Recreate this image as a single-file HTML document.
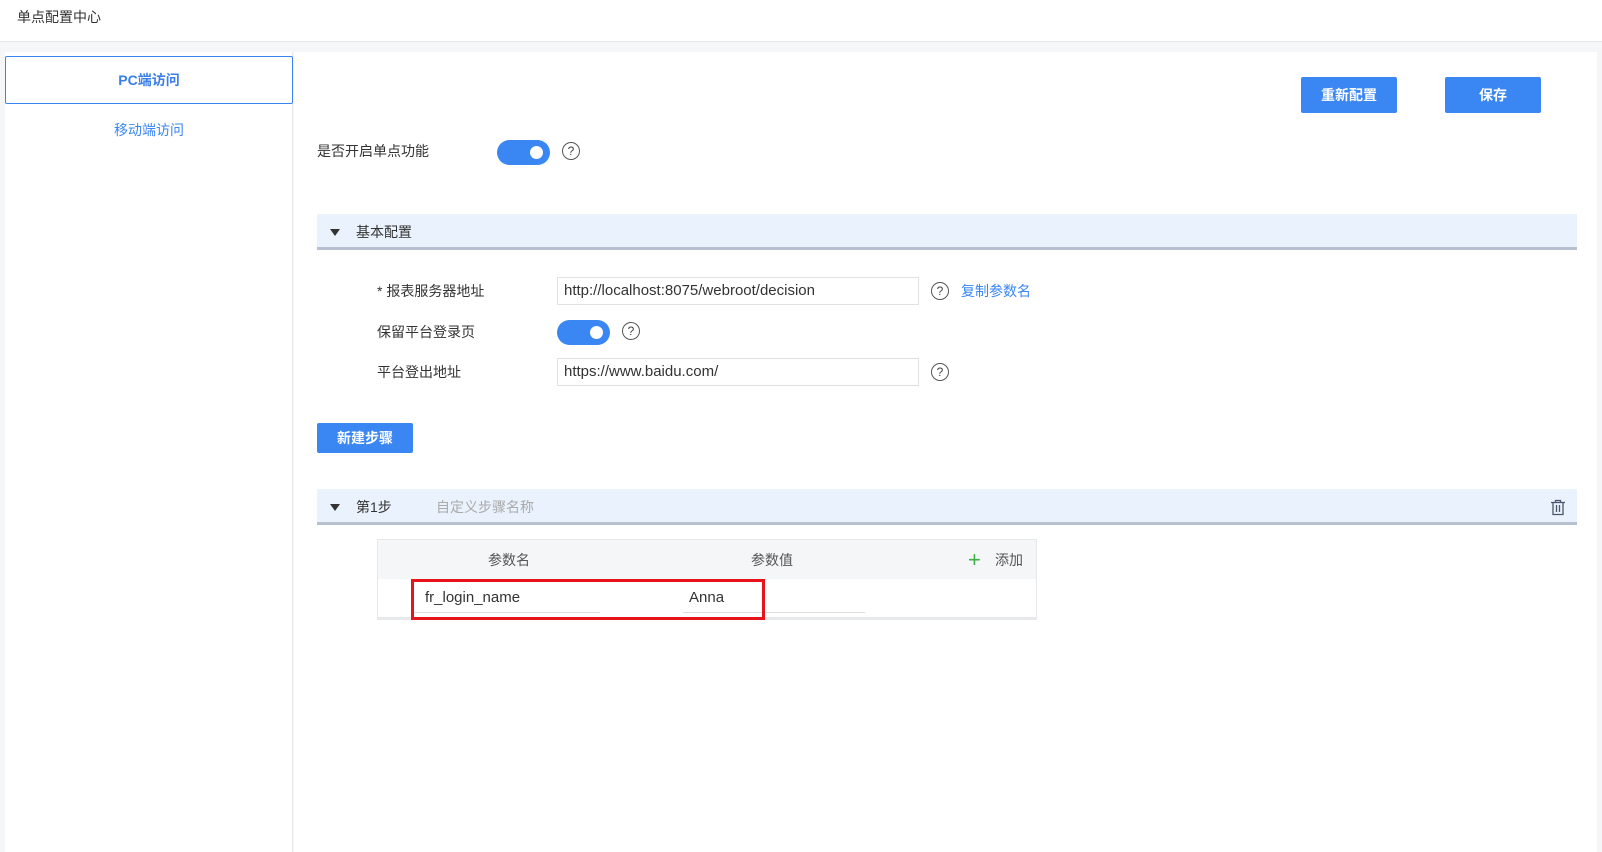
<!DOCTYPE html>
<html><head><meta charset="utf-8"><style>
*{box-sizing:border-box;margin:0;padding:0}
body{width:1602px;height:840px;background:#f5f6f8;font-family:"Liberation Sans","Noto Sans CJK SC",sans-serif;font-size:14px;color:#333;position:relative;overflow:hidden}
.a{position:absolute}
.hdr{left:0;top:0;width:1602px;height:42px;background:#fff;border-bottom:1px solid #e6e8eb}
.side{left:5px;top:52px;width:288px;height:800px;background:#fff;border-right:1px solid #e6e8eb}
.main{left:294px;top:52px;width:1303px;height:800px;background:#fff}
.btn{background:#3a86f3;color:#fff;font-weight:bold;border-radius:2px;text-align:center}
.tg{width:53px;height:25px;border-radius:13px;background:#3a86f3}
.tg:after{content:"";position:absolute;right:7px;top:6px;width:13px;height:13px;border-radius:50%;background:#fff}
.q{width:18px;height:18px;border:1.3px solid #555;border-radius:50%;font-size:12px;line-height:16px;text-align:center;color:#444}
.sec{left:317px;width:1260px;height:36px;background:#eaf2fd;border-bottom:3px solid #b5c1d1}
.tri{width:0;height:0;border-left:5px solid transparent;border-right:5px solid transparent;border-top:7px solid #333}
.inp{height:28px;border:1px solid #dfe1e5;background:#fff;padding-left:6px;line-height:26px;font-size:15px;color:#333}
.t{line-height:20px}
</style></head><body>
<div class="a hdr"></div>
<div class="a t" style="left:17px;top:7px;font-size:14px;color:#333">单点配置中心</div>
<div class="a side"></div>
<div class="a main"></div>
<div class="a" style="left:5px;top:56px;width:288px;height:48px;border:1px solid #3685f2;border-radius:2px;background:#fff;text-align:center;line-height:46px;color:#3a7fe6;font-weight:bold">PC端访问</div>
<div class="a" style="left:5px;top:119px;width:288px;text-align:center;line-height:22px;color:#3a86f3">移动端访问</div>

<div class="a btn" style="left:1301px;top:77px;width:96px;height:36px;line-height:36px">重新配置</div>
<div class="a btn" style="left:1445px;top:77px;width:96px;height:36px;line-height:36px">保存</div>

<div class="a t" style="left:317px;top:141px">是否开启单点功能</div>
<div class="a tg" style="left:497px;top:140px"></div>
<div class="a q" style="left:562px;top:142px">?</div>

<div class="a sec" style="top:214px"></div>
<div class="a tri" style="left:330px;top:229px"></div>
<div class="a t" style="left:356px;top:222px">基本配置</div>

<div class="a t" style="left:377px;top:281px">* 报表服务器地址</div>
<div class="a inp" style="left:557px;top:277px;width:362px">http://localhost:8075/webroot/decision</div>
<div class="a q" style="left:931px;top:282px">?</div>
<div class="a t" style="left:961px;top:281px;color:#3a86f3">复制参数名</div>

<div class="a t" style="left:377px;top:322px">保留平台登录页</div>
<div class="a tg" style="left:557px;top:320px"></div>
<div class="a q" style="left:622px;top:322px">?</div>

<div class="a t" style="left:377px;top:362px">平台登出地址</div>
<div class="a inp" style="left:557px;top:358px;width:362px">https://www.baidu.com/</div>
<div class="a q" style="left:931px;top:363px">?</div>

<div class="a btn" style="left:317px;top:423px;width:96px;height:30px;line-height:30px">新建步骤</div>

<div class="a sec" style="top:489px"></div>
<div class="a tri" style="left:330px;top:504px"></div>
<div class="a t" style="left:356px;top:497px">第1步</div>
<div class="a t" style="left:436px;top:497px;color:#aaa">自定义步骤名称</div>
<svg class="a" style="left:1550px;top:499px" width="16" height="17" viewBox="0 0 16 17" fill="none" stroke="#4a5670" stroke-width="1.3"><path d="M1 3.5h14M5.5 3.5V1.5h5v2M3 3.5v12h10v-12M6.5 6v7M9.5 6v7"/></svg>

<div class="a" style="left:377px;top:539px;width:660px;height:81px;border:1px solid #e6e8eb;background:#fff"></div>
<div class="a" style="left:378px;top:540px;width:658px;height:39px;background:#f5f6f8"></div>
<div class="a t" style="left:488px;top:550px;color:#555">参数名</div>
<div class="a t" style="left:751px;top:550px;color:#555">参数值</div>
<div class="a" style="left:968px;top:552px;color:#3cb043;font-size:22px;line-height:16px">+</div>
<div class="a t" style="left:995px;top:550px;color:#555">添加</div>
<div class="a" style="left:378px;top:617px;width:658px;height:2px;background:#e6e8eb"></div>
<div class="a" style="left:411px;top:612px;width:189px;height:1px;background:#ddd"></div>
<div class="a" style="left:683px;top:612px;width:182px;height:1px;background:#ddd"></div>
<div class="a t" style="left:425px;top:588px;font-size:15px">fr_login_name</div>
<div class="a t" style="left:689px;top:588px;font-size:15px">Anna</div>
<div class="a" style="left:411px;top:579px;width:354px;height:41px;border:3px solid #e8141b"></div>
</body></html>
